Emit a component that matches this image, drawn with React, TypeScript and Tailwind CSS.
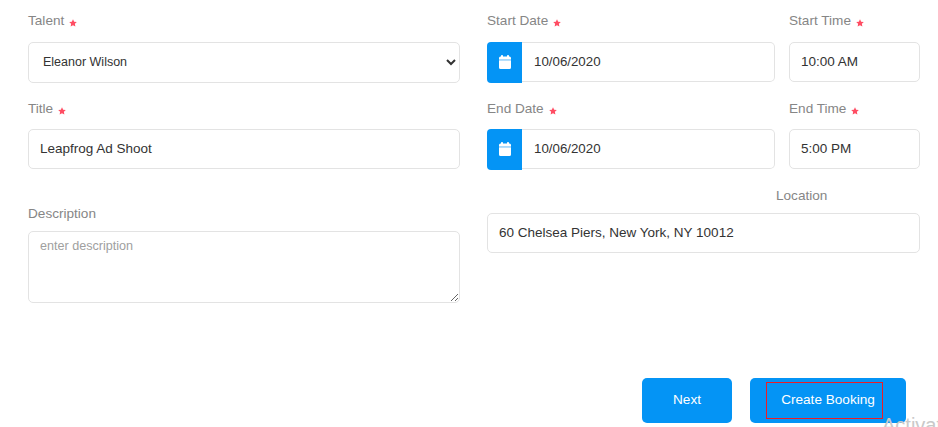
import React from "react";

const FONT = "[font-family:'Liberation_Sans',Arial,sans-serif]";

function Star() {
  return (
    <svg width="8" height="8" viewBox="0 0 24 24" className="ml-[5px] mt-[3px] shrink-0">
      <path fill="#ff4d63" d="M12 0.500l3.500 7.500 8 1-5.900 5.500 1.500 8.200L12 18.800l-7.100 3.900 1.500-8.200L0.500 9l8-1z" />
    </svg>
  );
}

function Label({ text, req, className = "" }: { text: string; req?: boolean; className?: string }) {
  return (
    <div className={`flex items-center h-[16px] text-[13.6px] leading-[16px] text-[#868686] ${className}`}>
      <span>{text}</span>
      {req && <Star />}
    </div>
  );
}

function Field({ value, className = "" }: { value: string; className?: string }) {
  return (
    <input
      readOnly
      value={value}
      className={`block w-full h-[40px] rounded-[5px] border border-[#e3e3e3] bg-white px-[11px] pb-[2px] text-[13.5px] text-[#333] outline-none ${FONT} ${className}`}
    />
  );
}

function DateField({ value }: { value: string }) {
  return (
    <div className="flex h-[41px]">
      <div className="flex w-[35px] items-center justify-center rounded-l-[4px] bg-[#0494f5] pb-[2px]">
        <svg width="12" height="14" viewBox="0 0 12 14">
          <rect x="2" y="0" width="2" height="3" rx="0.8" fill="#fff" />
          <rect x="8" y="0" width="2" height="3" rx="0.8" fill="#fff" />
          <path fill="#fff" d="M1.500 1.500h9A1.500 1.500 0 0 1 12 3v1.500H0V3a1.500 1.500 0 0 1 1.500-1.500z" />
          <rect x="0" y="4.500" width="12" height="1" fill="#cfe8fc" />
          <path fill="#fff" d="M0 5.500h12v7A1.500 1.500 0 0 1 10.500 14h-9A1.500 1.500 0 0 1 0 12.500z" />
        </svg>
      </div>
      <input
        readOnly
        value={value}
        className={`block min-w-0 flex-1 h-[40px] rounded-r-[5px] border border-l-0 border-[#e3e3e3] bg-white pl-[12px] pb-[2px] text-[13.3px] text-[#333] outline-none ${FONT}`}
      />
    </div>
  );
}

export default function App() {
  return (
    <div className={`relative h-[427px] w-[938px] overflow-hidden bg-white ${FONT}`}>
      <div className="flex gap-[27px] pl-[28px] pt-[13px]">
        <div className="w-[432px]">
          <Label text="Talent" req />
          <select
            defaultValue="Eleanor Wilson"
            className={`mt-[13px] block h-[41px] w-full rounded-[5px] border border-[#e3e3e3] bg-white pl-[10px] pr-[4px] pb-[2px] text-[12.5px] text-[#333] outline-none ${FONT}`}
          >
            <option>Eleanor Wilson</option>
          </select>
          <Label text="Title" req className="mt-[18px]" />
          <Field value="Leapfrog Ad Shoot" className="mt-[12px]" />
          <Label text="Description" className="mt-[37px]" />
          <textarea
            placeholder="enter description"
            className={`mt-[9px] block h-[72px] w-full rounded-[5px] border border-[#e3e3e3] bg-white px-[11px] py-[5px] text-[12.6px] text-[#333] outline-none placeholder:text-[#a0a0a0] ${FONT}`}
          />
        </div>
        <div className="w-[433px]">
          <div className="flex gap-[14px]">
            <div className="w-[288px]">
              <Label text="Start Date" req />
              <div className="mt-[13px]">
                <DateField value="10/06/2020" />
              </div>
              <Label text="End Date" req className="mt-[18px]" />
              <div className="mt-[12px]">
                <DateField value="10/06/2020" />
              </div>
            </div>
            <div className="w-[131px]">
              <Label text="Start Time" req />
              <Field value="10:00 AM" className="mt-[13px]" />
              <Label text="End Time" req className="mt-[19px]" />
              <Field value="5:00 PM" className="mt-[12px]" />
            </div>
          </div>
          <Label text="Location" className="mt-[18px] pl-[289px]" />
          <Field value="60 Chelsea Piers, New York, NY 10012" className="mt-[9px]" />
        </div>
      </div>

      <div className="mt-[75px] flex justify-end gap-[18px] pr-[32px]">
        <button className={`h-[45px] w-[90px] rounded-[5px] bg-[#0494f5] text-[13.6px] font-normal text-white ${FONT}`}>
          Next
        </button>
        <button className={`relative h-[45px] w-[156px] rounded-[5px] bg-[#0494f5] text-[13.6px] text-white ${FONT}`}>
          Create Booking
          <span className="absolute left-[16px] top-[4px] h-[37px] w-[117px] border border-[#ee1c25]" />
        </button>
      </div>

      <div className="absolute left-[882px] top-[413px] text-[20px] leading-[24px] whitespace-nowrap text-[#c9c9c9]">
        Activate Windows
      </div>
    </div>
  );
}
